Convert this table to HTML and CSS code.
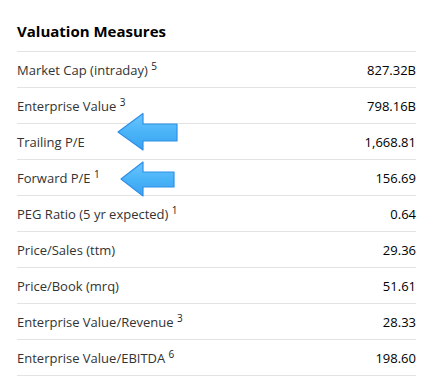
FILE: index.html
```html
<!DOCTYPE html>
<html>
<head>
<meta charset="utf-8">
<link rel="stylesheet" href="styles.css">
</head>
<body>
<section class="panel">
  <h3 class="title">Valuation Measures</h3>
  <div class="table">
    <div class="row"><span class="label">Market Cap (intraday) <sup>5</sup></span><span class="value">827.32B</span></div>
    <div class="row"><span class="label">Enterprise Value <sup>3</sup></span><span class="value">798.16B</span></div>
    <div class="row"><span class="label">Trailing P/E</span><span class="value">1,668.81</span></div>
    <div class="row"><span class="label">Forward P/E <sup>1</sup></span><span class="value">156.69</span></div>
    <div class="row"><span class="label">PEG Ratio (5 yr expected) <sup>1</sup></span><span class="value">0.64</span></div>
    <div class="row"><span class="label">Price/Sales (ttm)</span><span class="value">29.36</span></div>
    <div class="row"><span class="label">Price/Book (mrq)</span><span class="value">51.61</span></div>
    <div class="row"><span class="label">Enterprise Value/Revenue <sup>3</sup></span><span class="value">28.33</span></div>
    <div class="row"><span class="label">Enterprise Value/EBITDA <sup>6</sup></span><span class="value">198.60</span></div>
  </div>
</section>
<svg class="arrows" width="443" height="387" viewBox="0 0 443 387" aria-hidden="true">
  <defs>
    <linearGradient id="ag" x1="0" y1="0" x2="0" y2="1">
      <stop offset="0" stop-color="#6cc6ff"/>
      <stop offset="0.5" stop-color="#4ab4f8"/>
      <stop offset="1" stop-color="#3aa2f0"/>
    </linearGradient>
  </defs>
  <polygon points="118,132 143,113.5 143,124 177,124 177,141 143,141 143,150" fill="url(#ag)" stroke="#2f8fe6" stroke-width="1.2" stroke-linejoin="round"/>
  <polygon points="121,179 143,162 143,172 174,172 174,187 143,187 143,196" fill="url(#ag)" stroke="#2f8fe6" stroke-width="1.2" stroke-linejoin="round"/>
</svg>
</body>
</html>
```

FILE: styles.css
```css
html, body {
  margin: 0;
  padding: 0;
  background: #ffffff;
}
body {
  font-family: "Open Sans", "Liberation Sans", sans-serif;
  width: 443px;
  height: 387px;
  overflow: hidden;
}
.panel {
  padding: 20px 0 0 17px;
  width: 399px;
}
.title {
  margin: 0;
  font-size: 15px;
  font-weight: 700;
  color: #000;
  line-height: 22px;
  height: 31px;
}
.table {
  border-top: 1px solid #e3e3e3;
}
.row {
  display: flex;
  justify-content: space-between;
  align-items: center;
  height: 35px;
  border-bottom: 1px solid #e3e3e3;
  font-size: 13px;
}
.label {
  color: #333333;
}
.label sup {
  font-size: 10px;
  vertical-align: 5px;
  line-height: 0;
  color: #222;
}
.value {
  color: #000;
}
.arrows {
  position: absolute;
  left: 0;
  top: 0;
  pointer-events: none;
}
```
